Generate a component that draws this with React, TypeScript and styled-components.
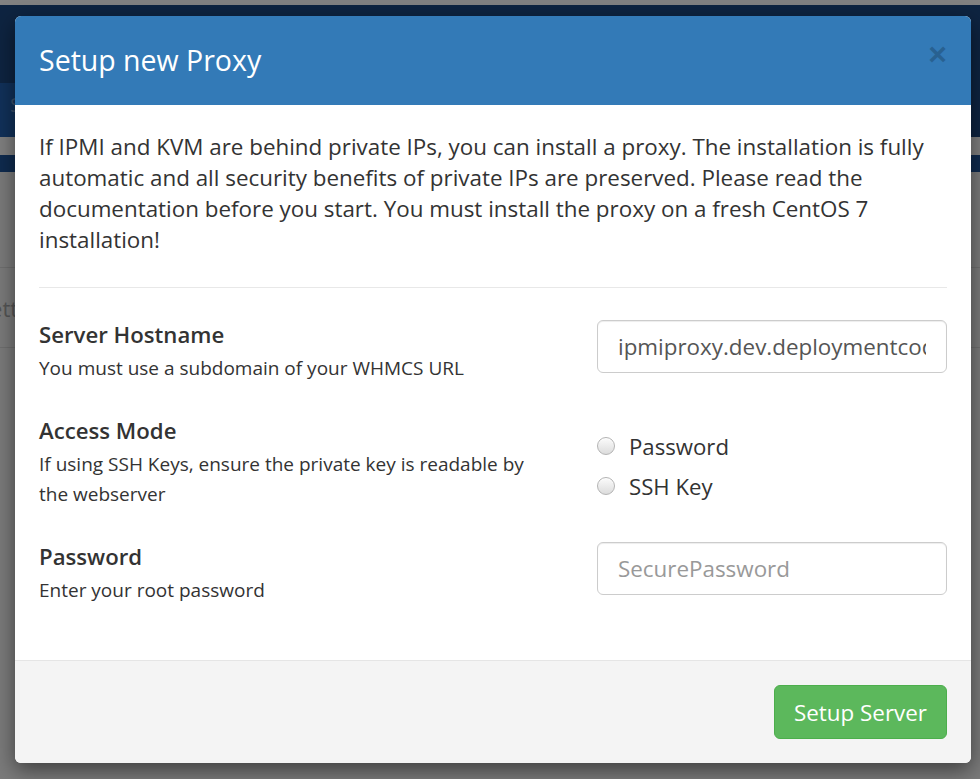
import React from "react";
import styled, { createGlobalStyle } from "styled-components";

const Global = createGlobalStyle`
  html, body { margin: 0; padding: 0; height: 100%; }
  body { font-family: "Open Sans", "Liberation Sans", sans-serif; overflow: hidden; }
  * { box-sizing: border-box; }
`;

const Page = styled.div`
  position: relative;
  width: 980px;
  height: 779px;
  overflow: hidden;
  display: flex;
  flex-direction: column;
  background: #7b7b7b;
`;

const TopStrip = styled.div`
  height: 5px;
  background: #828282;
`;

const NavTop = styled.div`
  height: 78px;
  background: #0e2441;
`;

const SubNav = styled.div`
  height: 54px;
  background: #0e2441;
  display: flex;
`;

const SubNavItem = styled.div`
  width: 60px;
  background: #11315a;
  color: #3a4f6a;
  font-size: 20px;
  padding: 8px 10px;
`;

const GrayBand = styled.div`
  height: 18px;
  background: #808080;
`;

const NavBand = styled.div`
  height: 17px;
  background: #0f2b4f;
`;

const ContentRow = styled.div<{ $h: number; $line?: boolean }>`
  height: ${(p) => p.$h}px;
  border-bottom: ${(p) => (p.$line ? "1px solid #6f6f6f" : "none")};
  color: #555;
  font-size: 22px;
  display: flex;
  align-items: center;
`;

const RowText = styled.span`
  margin-left: -22px;
`;

const Overlay = styled.div`
  position: absolute;
  inset: 0;
  padding: 16px 0 0 15px;
`;

const Modal = styled.div`
  width: 956px;
  background: #fff;
  border-radius: 6px;
  box-shadow: 0 7px 21px rgba(0, 0, 0, 0.5);
  overflow: hidden;
`;

const Header = styled.div`
  height: 89px;
  background: #337ab7;
  padding: 0 24px;
  display: flex;
  align-items: center;
  justify-content: space-between;
`;

const Title = styled.h4`
  margin: 0;
  color: #fff;
  font-size: 28.5px;
  font-weight: 400;
  line-height: 1.1;
`;

const Close = styled.span`
  align-self: flex-start;
  margin-top: 22px;
  margin-right: 0;
  font-size: 32px;
  font-weight: 700;
  line-height: 1;
  color: #000;
  opacity: 0.2;
  font-family: "Liberation Sans", "Open Sans", sans-serif;
`;

const Body = styled.div`
  padding: 26px 24px 55px;
  color: #333;
`;

const Intro = styled.p`
  margin: 0;
  font-size: 22.4px;
  line-height: 31px;
`;

const Rule = styled.hr`
  margin: 32px 0 32px;
  border: 0;
  border-top: 1px solid #e8e8e8;
`;

const Rows = styled.div`
  display: flex;
  flex-direction: column;
  gap: 33px;
`;

const Row = styled.div`
  display: grid;
  grid-template-columns: 512px 350px;
  column-gap: 46px;
  align-items: start;
`;

const LabelBlock = styled.div`
  display: flex;
  flex-direction: column;
`;

const Label = styled.div`
  font-size: 22.2px;
  font-weight: 600;
  line-height: 30px;
  color: #333;
`;

const Help = styled.div`
  margin-top: 3px;
  font-size: 19px;
  line-height: 30px;
  color: #333;
`;

const Input = styled.input`
  width: 100%;
  height: 53px;
  padding: 0 20px;
  border: 1px solid #cccccc;
  border-radius: 6px;
  box-shadow: inset 0 1px 1px rgba(0, 0, 0, 0.075);
  font-family: "Open Sans", "Liberation Sans", sans-serif;
  font-size: 22.4px;
  color: #555;
  background: #fff;
  outline: none;
  &::placeholder { color: #999; }
`;

const RadioList = styled.div`
  display: flex;
  flex-direction: column;
  gap: 6px;
  padding-top: 13px;
`;

const RadioItem = styled.label`
  height: 34px;
  display: flex;
  align-items: center;
  gap: 14px;
  font-size: 22.2px;
  color: #333;
`;

const RadioDot = styled.span`
  width: 18px;
  height: 18px;
  border-radius: 50%;
  border: 1px solid #b3b3b3;
  background: linear-gradient(#fbfbfb, #dcdcdc);
  box-shadow: inset 0 1px 0 rgba(255, 255, 255, 0.8);
  flex: none;
`;

const Footer = styled.div`
  background: #f4f4f4;
  border-top: 1px solid #e5e5e5;
  padding: 24px 24px 24px;
  display: flex;
  justify-content: flex-end;
`;

const Button = styled.button`
  height: 54px;
  width: 173px;
  background: #5cb85c;
  border: 1px solid #4cae4c;
  border-radius: 6px;
  color: #fff;
  font-family: "Open Sans", "Liberation Sans", sans-serif;
  font-size: 22.4px;
  font-weight: 400;
  padding: 0;
`;

export default function App() {
  return (
    <>
      <Global />
      <Page>
        <TopStrip />
        <NavTop />
        <SubNav>
          <SubNavItem>S</SubNavItem>
        </SubNav>
        <GrayBand />
        <NavBand />
        <ContentRow $h={96} $line />
        <ContentRow $h={80} $line>
          <RowText>Settings</RowText>
        </ContentRow>
        <ContentRow $h={80} />
        <Overlay>
          <Modal>
            <Header>
              <Title>Setup new Proxy</Title>
              <Close>×</Close>
            </Header>
            <Body>
              <Intro>
                If IPMI and KVM are behind private IPs, you can install a proxy. The installation is
                fully automatic and all security benefits of private IPs are preserved. Please read
                the documentation before you start. You must install the proxy on a fresh CentOS 7
                installation!
              </Intro>
              <Rule />
              <Rows>
                <Row>
                  <LabelBlock>
                    <Label>Server Hostname</Label>
                    <Help>You must use a subdomain of your WHMCS URL</Help>
                  </LabelBlock>
                  <Input readOnly value="ipmiproxy.dev.deploymentcode.com" />
                </Row>
                <Row>
                  <LabelBlock>
                    <Label>Access Mode</Label>
                    <Help>If using SSH Keys, ensure the private key is readable by the webserver</Help>
                  </LabelBlock>
                  <RadioList>
                    <RadioItem>
                      <RadioDot />
                      Password
                    </RadioItem>
                    <RadioItem>
                      <RadioDot />
                      SSH Key
                    </RadioItem>
                  </RadioList>
                </Row>
                <Row>
                  <LabelBlock>
                    <Label>Password</Label>
                    <Help>Enter your root password</Help>
                  </LabelBlock>
                  <Input readOnly placeholder="SecurePassword" />
                </Row>
              </Rows>
            </Body>
            <Footer>
              <Button>Setup Server</Button>
            </Footer>
          </Modal>
        </Overlay>
      </Page>
    </>
  );
}
